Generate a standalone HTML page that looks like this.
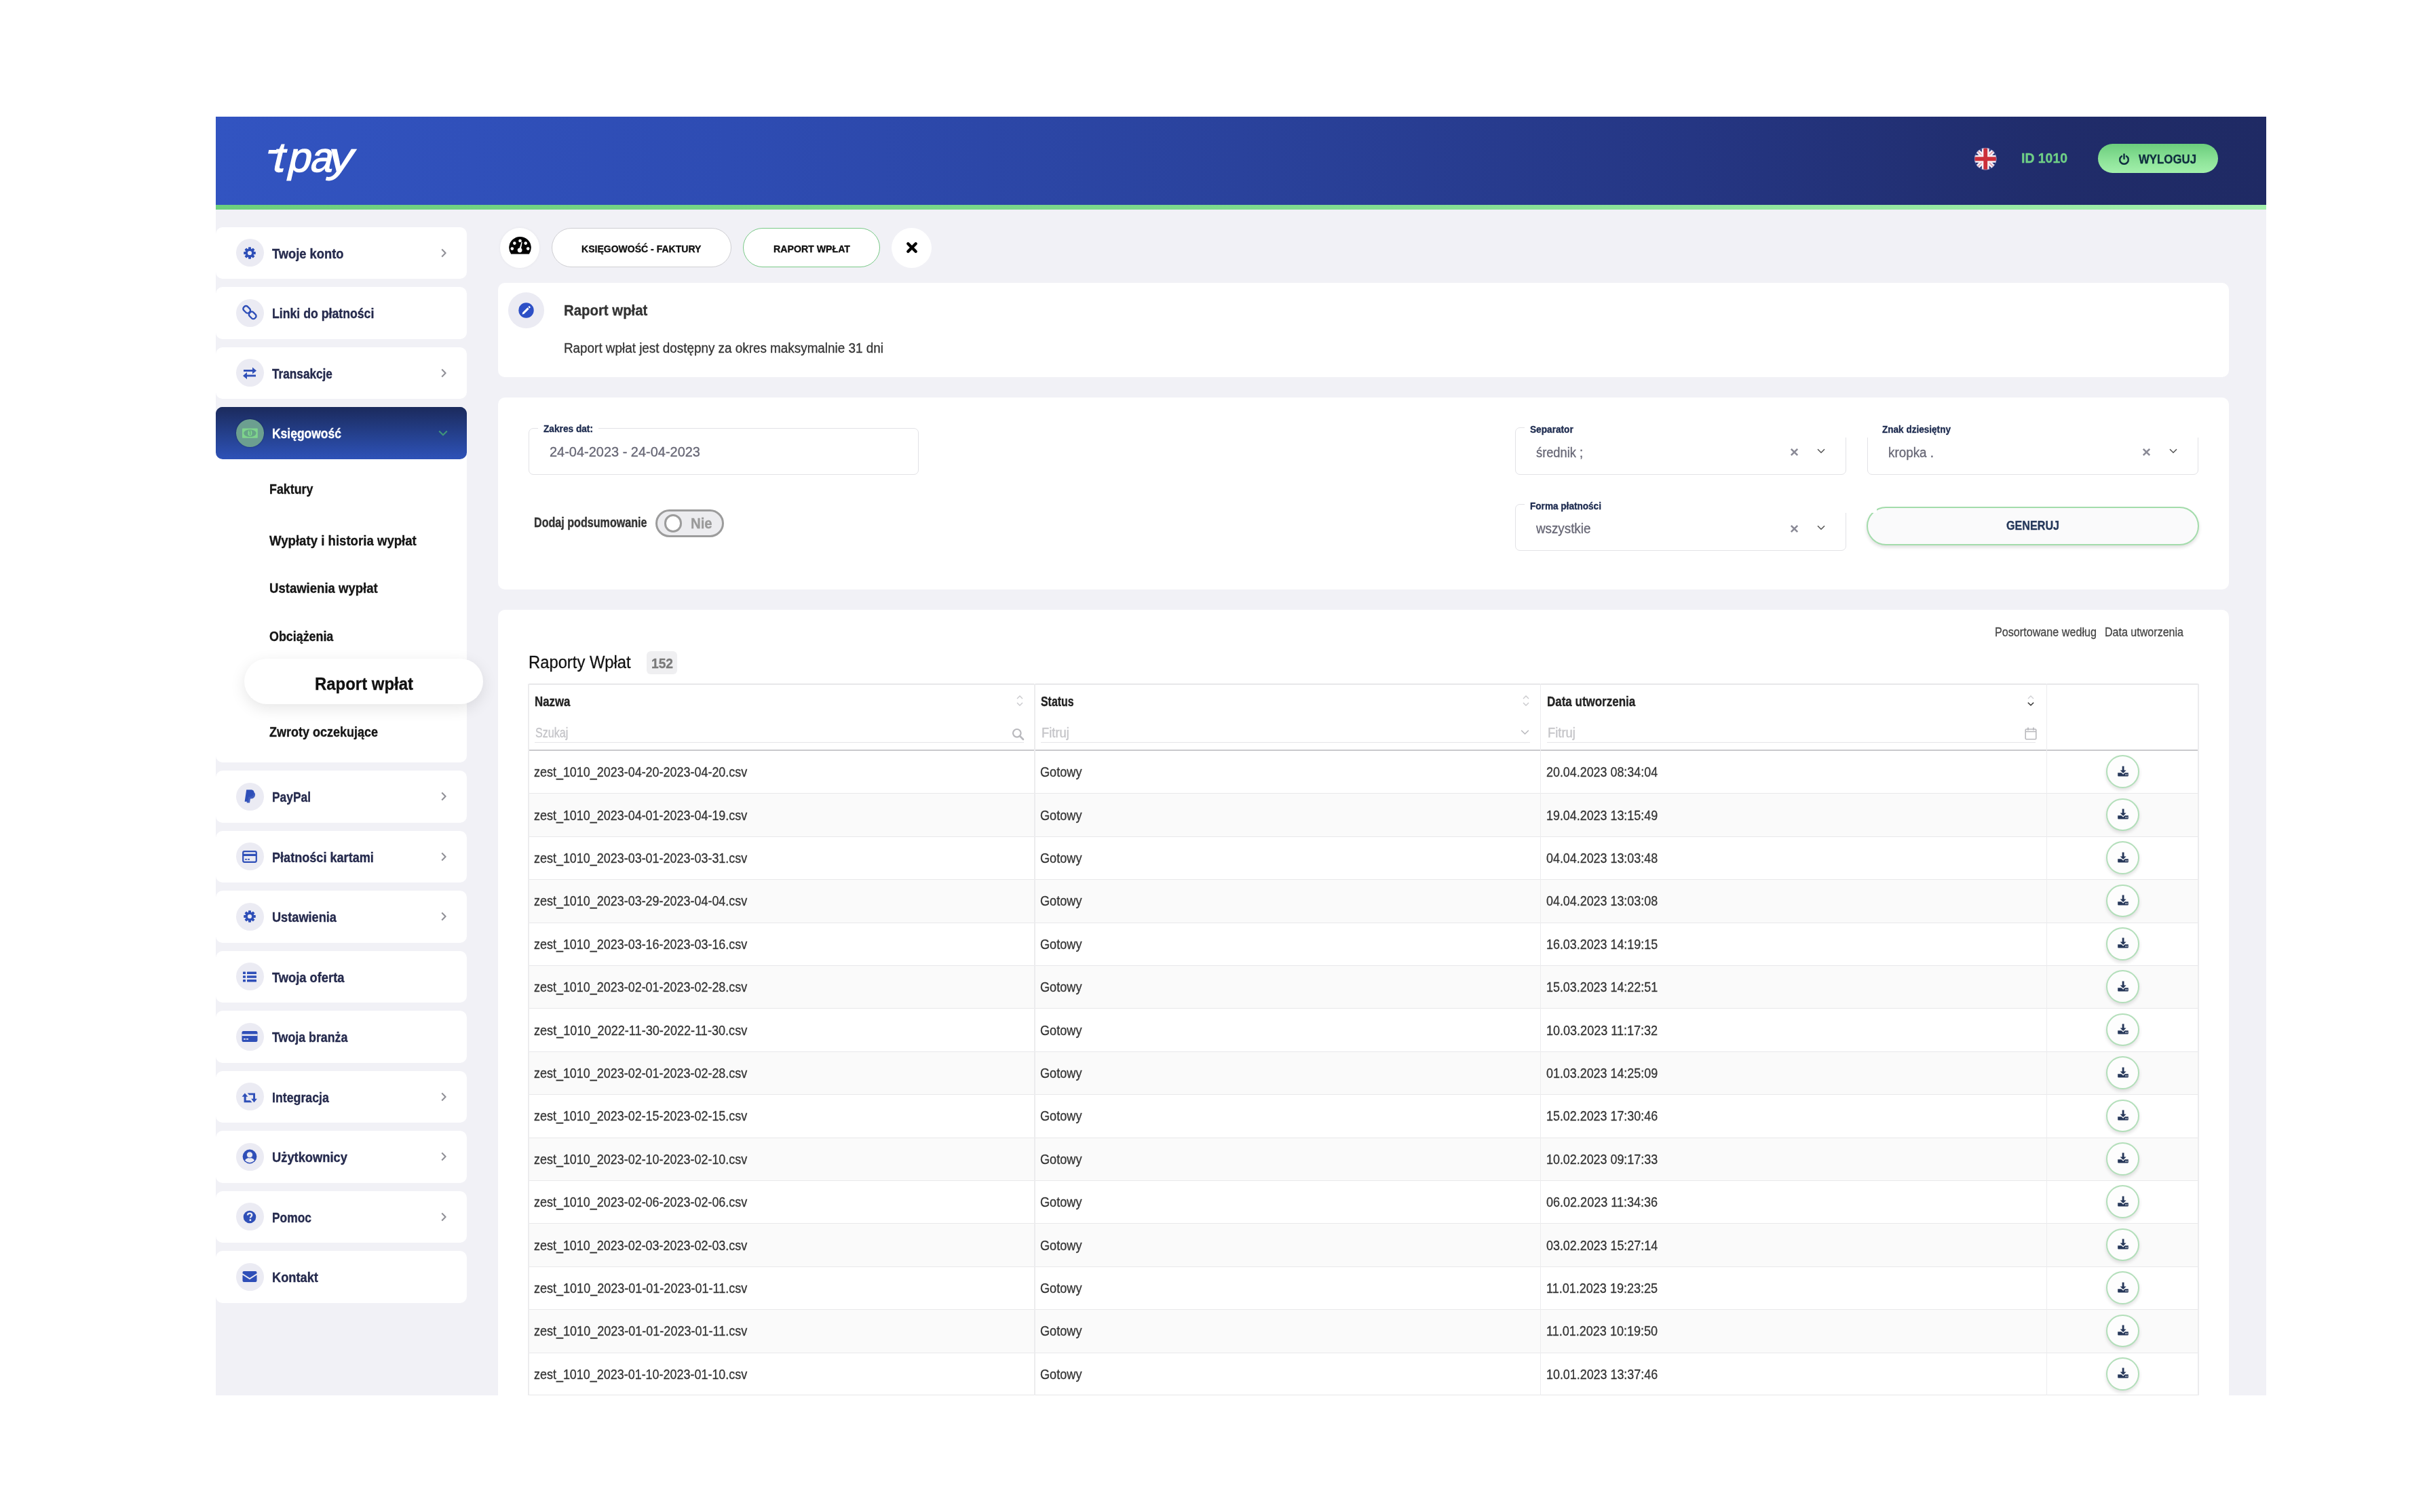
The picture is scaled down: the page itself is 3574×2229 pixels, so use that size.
<!DOCTYPE html><html><head><meta charset="utf-8"><style>
html,body{margin:0;padding:0;background:#fff;width:3574px;height:2229px;overflow:hidden;position:relative;font-family:"Liberation Sans",sans-serif;}
.t{position:absolute;white-space:nowrap;transform-origin:0 50%;}
.b{position:absolute;box-sizing:border-box;}
svg.b{overflow:visible;}
#root{position:absolute;left:0;top:0;width:3574px;height:2229px;will-change:transform;}
</style></head><body><div id="root">
<div class="b" style="left:318.0px;top:172.0px;width:3022.0px;height:1885.0px;background:#f1f1f6;"></div>
<div class="b" style="left:318.0px;top:172.0px;width:3022.0px;height:130.0px;background:linear-gradient(90deg,#3254c1 0%,#2e4cb3 25%,#2a429c 50%,#253683 72%,#202c6a 90%,#1f2a64 100%);"></div>
<div class="b" style="left:318.0px;top:302.0px;width:3022.0px;height:7.0px;background:linear-gradient(90deg,#6dcf7e 0%,#7dda8d 50%,#a3f0ad 100%);"></div>
<svg class="b" style="left:0;top:0" width="600" height="300" viewBox="0 0 600 300"><g transform="translate(0,252.7) skewX(-13) translate(0,-252.7)" fill="#fff" stroke="#fff" stroke-width="1.3" font-family="Liberation Sans" font-size="61.6"><text x="399.5" y="252.7">t</text><rect x="389" y="221.1" width="14" height="5.4" stroke="none"/><text x="421.7" y="252.7">p</text><text x="455.3" y="252.7" transform="translate(455.3,0) scale(0.95,1) translate(-455.3,0)">a</text><text x="481.2" y="252.7" transform="translate(481.2,0) scale(1.18,1) translate(-481.2,0)">y</text></g></svg>
<svg class="b" style="left:2910.0px;top:218.0px" width="32.5" height="32.5" viewBox="0 0 32.5 32.5"><defs><clipPath id="fc"><circle cx="16.25" cy="16.25" r="16.25"/></clipPath></defs>
<g clip-path="url(#fc)"><rect width="33" height="33" fill="#18246c"/>
<path d="M0 0L32.5 32.5M32.5 0L0 32.5" stroke="#f4eef6" stroke-width="6.5"/>
<path d="M0 0L32.5 32.5M32.5 0L0 32.5" stroke="#d0454f" stroke-width="1.2" opacity="0.6"/>
<path d="M16.25 0V32.5M0 16.25H32.5" stroke="#f6eef4" stroke-width="10.9"/>
<path d="M16.25 0V32.5M0 16.25H32.5" stroke="#cc2f3a" stroke-width="5.8"/></g><circle cx="16.25" cy="16.25" r="16" fill="none" stroke="#7f8fc8" stroke-width="1" opacity="0.6"/></svg>
<div class="t" style="left:2979.0px;top:223.0px;font-size:20.35px;line-height:20.35px;font-weight:700;color:#6fcf86;-webkit-text-stroke:0.35px #6fcf86;transform:scaleX(0.9541);">ID 1010</div>
<div class="b" style="left:3092.0px;top:212.0px;width:177.0px;height:43.0px;border-radius:22px;background:linear-gradient(180deg,#6bcd7d 0%,#8fe49a 60%,#a2f0ab 100%);"></div>
<svg class="b" style="left:3122.0px;top:226.0px" width="17.0" height="17.0" viewBox="0 0 17 17"><path d="M5 4.2A6.3 6.3 0 1 0 12 4.2" fill="none" stroke="#0f2d3f" stroke-width="2.4" stroke-linecap="round"/><path d="M8.5 1.5V8" stroke="#0f2d3f" stroke-width="2.4" stroke-linecap="round"/></svg>
<div class="t" style="left:3152.0px;top:226.3px;font-size:18.90px;line-height:18.90px;font-weight:700;color:#0f2d3f;-webkit-text-stroke:0.35px #0f2d3f;transform:scaleX(0.8898);">WYLOGUJ</div>
<div class="b" style="left:318.0px;top:334.5px;width:370.0px;height:76.5px;background:#fff;border-radius:10px;"></div>
<div class="b" style="left:348.0px;top:352.4px;width:40.8px;height:40.8px;background:#ebebf3;border-radius:50%;"></div>
<svg class="b" style="left:358.4px;top:362.8px" width="20.0" height="20.0" viewBox="0 0 20 20"><g fill="#2f4fb8"><circle cx="10" cy="10" r="6.4"/><rect x="8" y="1.2" width="4" height="4.5" rx="0.8" transform="rotate(0 10 10)"/><rect x="8" y="1.2" width="4" height="4.5" rx="0.8" transform="rotate(45 10 10)"/><rect x="8" y="1.2" width="4" height="4.5" rx="0.8" transform="rotate(90 10 10)"/><rect x="8" y="1.2" width="4" height="4.5" rx="0.8" transform="rotate(135 10 10)"/><rect x="8" y="1.2" width="4" height="4.5" rx="0.8" transform="rotate(180 10 10)"/><rect x="8" y="1.2" width="4" height="4.5" rx="0.8" transform="rotate(225 10 10)"/><rect x="8" y="1.2" width="4" height="4.5" rx="0.8" transform="rotate(270 10 10)"/><rect x="8" y="1.2" width="4" height="4.5" rx="0.8" transform="rotate(315 10 10)"/></g><circle cx="10" cy="10" r="3.1" fill="#ebebf3"/></svg>
<div class="t" style="left:401.0px;top:363.7px;font-size:20.20px;line-height:20.20px;font-weight:700;color:#252a4d;-webkit-text-stroke:0.35px #252a4d;transform:scaleX(0.9067);">Twoje konto</div>
<svg class="b" style="left:648.5px;top:365.8px" width="10.0" height="14.0" viewBox="0 0 10 14"><path d="M2.2 1.5L7.6 7L2.2 12.5" fill="none" stroke="#8f8f96" stroke-width="2"/></svg>
<div class="b" style="left:318.0px;top:423.0px;width:370.0px;height:76.5px;background:#fff;border-radius:10px;"></div>
<div class="b" style="left:348.0px;top:440.9px;width:40.8px;height:40.8px;background:#ebebf3;border-radius:50%;"></div>
<svg class="b" style="left:358.4px;top:451.2px" width="20.0" height="20.0" viewBox="0 0 20 20"><g fill="none" stroke="#2f4fb8" stroke-width="2.4"><rect x="0.2" y="1.45" width="11" height="7.8" rx="3.2" transform="rotate(45 5.7 5.35)"/><rect x="8.7" y="9.95" width="11" height="7.8" rx="3.2" transform="rotate(45 14.2 13.85)"/></g></svg>
<div class="t" style="left:401.0px;top:452.2px;font-size:20.20px;line-height:20.20px;font-weight:700;color:#252a4d;-webkit-text-stroke:0.35px #252a4d;transform:scaleX(0.8763);">Linki do płatności</div>
<div class="b" style="left:318.0px;top:511.5px;width:370.0px;height:76.5px;background:#fff;border-radius:10px;"></div>
<div class="b" style="left:348.0px;top:529.4px;width:40.8px;height:40.8px;background:#ebebf3;border-radius:50%;"></div>
<svg class="b" style="left:357.4px;top:539.8px" width="22.0" height="20.0" viewBox="0 0 22 20"><g fill="#2f4fb8"><rect x="2" y="5" width="15" height="2.8"/><path d="M15 1.5L21 6.4L15 11.3Z"/><rect x="5" y="12.5" width="15" height="2.8"/><path d="M7 8.7L1 13.9L7 19Z"/></g></svg>
<div class="t" style="left:401.0px;top:540.7px;font-size:20.20px;line-height:20.20px;font-weight:700;color:#252a4d;-webkit-text-stroke:0.35px #252a4d;transform:scaleX(0.8520);">Transakcje</div>
<svg class="b" style="left:648.5px;top:542.8px" width="10.0" height="14.0" viewBox="0 0 10 14"><path d="M2.2 1.5L7.6 7L2.2 12.5" fill="none" stroke="#8f8f96" stroke-width="2"/></svg>
<div class="b" style="left:318.0px;top:600.0px;width:370.0px;height:76.5px;background:linear-gradient(180deg,#1b2a5c 0%,#25418f 55%,#2e52b8 100%);border-radius:10px 10px 0 0;"></div>
<div class="b" style="left:318.0px;top:660.0px;width:370.0px;height:463.5px;background:#fff;border-radius:0 0 10px 10px;"></div>
<div class="b" style="left:318.0px;top:600.0px;width:370.0px;height:76.5px;background:linear-gradient(180deg,#1b2a5c 0%,#25418f 55%,#2e52b8 100%);border-radius:10px;"></div>
<div class="b" style="left:348.0px;top:617.9px;width:40.8px;height:40.8px;background:#6c9f90;border-radius:50%;box-shadow:0 0 2px rgba(10,30,60,0.6);"></div>
<svg class="b" style="left:357.0px;top:630.6px" width="23.0" height="15.0" viewBox="0 0 23 15"><rect x="0" y="0.4" width="22.8" height="14.4" rx="0.8" fill="#7fd58c"/><ellipse cx="11.4" cy="7.6" rx="9.2" ry="5.4" fill="#67a487"/><ellipse cx="11.4" cy="7.4" rx="3" ry="4.4" fill="#80d690"/><path d="M10.4 4.4L11.6 3.8V10.4" fill="none" stroke="#4f9a6b" stroke-width="1.1"/></svg>
<div class="t" style="left:401.0px;top:629.3px;font-size:20.20px;line-height:20.20px;font-weight:700;color:#ffffff;-webkit-text-stroke:0.35px #ffffff;transform:scaleX(0.8652);">Księgowość</div>
<svg class="b" style="left:646.0px;top:634.0px" width="14.0" height="9.0" viewBox="0 0 14 9"><path d="M1.2 1.5L7 7.2L12.8 1.5" fill="none" stroke="#3f957a" stroke-width="2.1"/></svg>
<div class="t" style="left:397.0px;top:710.2px;font-size:21.08px;line-height:21.08px;font-weight:700;color:#151515;-webkit-text-stroke:0.35px #151515;transform:scaleX(0.8459);">Faktury</div>
<div class="t" style="left:397.0px;top:785.7px;font-size:21.08px;line-height:21.08px;font-weight:700;color:#151515;-webkit-text-stroke:0.35px #151515;transform:scaleX(0.8829);">Wypłaty i historia wypłat</div>
<div class="t" style="left:397.0px;top:856.2px;font-size:21.08px;line-height:21.08px;font-weight:700;color:#151515;-webkit-text-stroke:0.35px #151515;transform:scaleX(0.8797);">Ustawienia wypłat</div>
<div class="t" style="left:397.0px;top:927.2px;font-size:21.08px;line-height:21.08px;font-weight:700;color:#151515;-webkit-text-stroke:0.35px #151515;transform:scaleX(0.8474);">Obciążenia</div>
<div class="t" style="left:397.0px;top:1068.2px;font-size:21.08px;line-height:21.08px;font-weight:700;color:#151515;-webkit-text-stroke:0.35px #151515;transform:scaleX(0.8537);">Zwroty oczekujące</div>
<div class="b" style="left:359.7px;top:971.0px;width:352.0px;height:67.0px;background:#fff;border-radius:34px;box-shadow:0 6px 22px rgba(0,0,0,0.10);"></div>
<div class="t" style="left:463.5px;top:994.9px;font-size:26.16px;line-height:26.16px;font-weight:700;color:#111;-webkit-text-stroke:0.35px #111;transform:scaleX(0.9152);">Raport wpłat</div>
<div class="b" style="left:318.0px;top:1136.0px;width:370.0px;height:76.5px;background:#fff;border-radius:10px;"></div>
<div class="b" style="left:348.0px;top:1153.8px;width:40.8px;height:40.8px;background:#ebebf3;border-radius:50%;"></div>
<svg class="b" style="left:358.4px;top:1163.2px" width="20.0" height="22.0" viewBox="0 0 20 22"><g fill="#2f4fb8"><path d="M5.2 1.2H11.6C15.4 1.2 17 3.4 16.4 6.6C15.7 10.2 13.2 11.8 9.8 11.8H8.4L7.2 18.8H2.6Z"/><path d="M8.2 4.6H13.6C16.8 4.6 18.6 6.4 18 9.6C17.4 12.8 15 14.6 12 14.6H11L10 20.6H5.6L6.6 16Z" fill-opacity="0.9"/></g><path d="M7.4 13.2L8.6 6.2H11.6C13.4 6.2 14.2 7.2 13.9 8.8C13.6 10.6 12.4 11.4 10.6 11.4H9.2Z" fill="#ebebf3" opacity="0.0"/></svg>
<div class="t" style="left:401.0px;top:1165.2px;font-size:20.20px;line-height:20.20px;font-weight:700;color:#252a4d;-webkit-text-stroke:0.35px #252a4d;transform:scaleX(0.8600);">PayPal</div>
<svg class="b" style="left:648.5px;top:1167.2px" width="10.0" height="14.0" viewBox="0 0 10 14"><path d="M2.2 1.5L7.6 7L2.2 12.5" fill="none" stroke="#8f8f96" stroke-width="2"/></svg>
<div class="b" style="left:318.0px;top:1224.5px;width:370.0px;height:76.5px;background:#fff;border-radius:10px;"></div>
<div class="b" style="left:348.0px;top:1242.3px;width:40.8px;height:40.8px;background:#ebebf3;border-radius:50%;"></div>
<svg class="b" style="left:357.4px;top:1253.8px" width="22.0" height="18.0" viewBox="0 0 22 18"><rect x="1.2" y="1.2" width="19.6" height="15.6" rx="2" fill="none" stroke="#2f4fb8" stroke-width="2.2"/><rect x="1" y="4.8" width="20" height="3.2" fill="#2f4fb8"/><rect x="4" y="12" width="3" height="1.6" fill="#2f4fb8"/><rect x="8" y="12" width="3" height="1.6" fill="#2f4fb8"/></svg>
<div class="t" style="left:401.0px;top:1253.7px;font-size:20.20px;line-height:20.20px;font-weight:700;color:#252a4d;-webkit-text-stroke:0.35px #252a4d;transform:scaleX(0.8965);">Płatności kartami</div>
<svg class="b" style="left:648.5px;top:1255.8px" width="10.0" height="14.0" viewBox="0 0 10 14"><path d="M2.2 1.5L7.6 7L2.2 12.5" fill="none" stroke="#8f8f96" stroke-width="2"/></svg>
<div class="b" style="left:318.0px;top:1313.0px;width:370.0px;height:76.5px;background:#fff;border-radius:10px;"></div>
<div class="b" style="left:348.0px;top:1330.8px;width:40.8px;height:40.8px;background:#ebebf3;border-radius:50%;"></div>
<svg class="b" style="left:358.4px;top:1341.2px" width="20.0" height="20.0" viewBox="0 0 20 20"><g fill="#2f4fb8"><circle cx="10" cy="10" r="6.4"/><rect x="8" y="1.2" width="4" height="4.5" rx="0.8" transform="rotate(0 10 10)"/><rect x="8" y="1.2" width="4" height="4.5" rx="0.8" transform="rotate(45 10 10)"/><rect x="8" y="1.2" width="4" height="4.5" rx="0.8" transform="rotate(90 10 10)"/><rect x="8" y="1.2" width="4" height="4.5" rx="0.8" transform="rotate(135 10 10)"/><rect x="8" y="1.2" width="4" height="4.5" rx="0.8" transform="rotate(180 10 10)"/><rect x="8" y="1.2" width="4" height="4.5" rx="0.8" transform="rotate(225 10 10)"/><rect x="8" y="1.2" width="4" height="4.5" rx="0.8" transform="rotate(270 10 10)"/><rect x="8" y="1.2" width="4" height="4.5" rx="0.8" transform="rotate(315 10 10)"/></g><circle cx="10" cy="10" r="3.1" fill="#ebebf3"/></svg>
<div class="t" style="left:401.0px;top:1342.2px;font-size:20.20px;line-height:20.20px;font-weight:700;color:#252a4d;-webkit-text-stroke:0.35px #252a4d;transform:scaleX(0.9001);">Ustawienia</div>
<svg class="b" style="left:648.5px;top:1344.2px" width="10.0" height="14.0" viewBox="0 0 10 14"><path d="M2.2 1.5L7.6 7L2.2 12.5" fill="none" stroke="#8f8f96" stroke-width="2"/></svg>
<div class="b" style="left:318.0px;top:1401.5px;width:370.0px;height:76.5px;background:#fff;border-radius:10px;"></div>
<div class="b" style="left:348.0px;top:1419.3px;width:40.8px;height:40.8px;background:#ebebf3;border-radius:50%;"></div>
<svg class="b" style="left:357.4px;top:1430.8px" width="22.0" height="18.0" viewBox="0 0 22 18"><g fill="#2f4fb8"><rect x="1" y="1.5" width="4" height="3.6" rx="0.6"/><rect x="7" y="1.5" width="14" height="3.6" rx="0.6"/><rect x="1" y="7.2" width="4" height="3.6" rx="0.6"/><rect x="7" y="7.2" width="14" height="3.6" rx="0.6"/><rect x="1" y="12.9" width="4" height="3.6" rx="0.6"/><rect x="7" y="12.9" width="14" height="3.6" rx="0.6"/></g></svg>
<div class="t" style="left:401.0px;top:1430.7px;font-size:20.20px;line-height:20.20px;font-weight:700;color:#252a4d;-webkit-text-stroke:0.35px #252a4d;transform:scaleX(0.9064);">Twoja oferta</div>
<div class="b" style="left:318.0px;top:1490.0px;width:370.0px;height:76.5px;background:#fff;border-radius:10px;"></div>
<div class="b" style="left:348.0px;top:1507.8px;width:40.8px;height:40.8px;background:#ebebf3;border-radius:50%;"></div>
<svg class="b" style="left:356.4px;top:1519.2px" width="24.0" height="18.0" viewBox="0 0 24 18"><rect x="0.5" y="1" width="23" height="16" rx="2.2" fill="#2f4fb8"/><rect x="0.5" y="5.5" width="23" height="2.6" fill="#ebebf3"/><rect x="3" y="12" width="3" height="1.6" fill="#ebebf3"/><rect x="7" y="12" width="3" height="1.6" fill="#ebebf3"/></svg>
<div class="t" style="left:401.0px;top:1519.2px;font-size:20.20px;line-height:20.20px;font-weight:700;color:#252a4d;-webkit-text-stroke:0.35px #252a4d;transform:scaleX(0.8816);">Twoja branża</div>
<div class="b" style="left:318.0px;top:1578.5px;width:370.0px;height:76.5px;background:#fff;border-radius:10px;"></div>
<div class="b" style="left:348.0px;top:1596.3px;width:40.8px;height:40.8px;background:#ebebf3;border-radius:50%;"></div>
<svg class="b" style="left:356.4px;top:1607.8px" width="24.0" height="18.0" viewBox="0 0 24 18"><g fill="#2f4fb8"><path d="M4.9 3.55L9.4 8.85H6.7V14.35H12.7L15.5 17.15H3.6V8.85H0.6Z"/><path d="M8.7 3.45H20V11.65H22.9L18.5 17.15L14.2 11.65H17.1V6.35H11.2Z"/></g></svg>
<div class="t" style="left:401.0px;top:1607.7px;font-size:20.20px;line-height:20.20px;font-weight:700;color:#252a4d;-webkit-text-stroke:0.35px #252a4d;transform:scaleX(0.8801);">Integracja</div>
<svg class="b" style="left:648.5px;top:1609.8px" width="10.0" height="14.0" viewBox="0 0 10 14"><path d="M2.2 1.5L7.6 7L2.2 12.5" fill="none" stroke="#8f8f96" stroke-width="2"/></svg>
<div class="b" style="left:318.0px;top:1667.0px;width:370.0px;height:76.5px;background:#fff;border-radius:10px;"></div>
<div class="b" style="left:348.0px;top:1684.8px;width:40.8px;height:40.8px;background:#ebebf3;border-radius:50%;"></div>
<svg class="b" style="left:357.4px;top:1694.2px" width="22.0" height="22.0" viewBox="0 0 22 22"><defs><clipPath id="uc"><circle cx="11" cy="11" r="8.9"/></clipPath></defs><circle cx="11" cy="11" r="10.4" fill="#2f4fb8"/><ellipse cx="11" cy="18.4" rx="7.4" ry="5.6" fill="#ebebf3" clip-path="url(#uc)"/><circle cx="11" cy="8.4" r="4.6" fill="#ebebf3" stroke="#2f4fb8" stroke-width="1"/></svg>
<div class="t" style="left:401.0px;top:1696.2px;font-size:20.20px;line-height:20.20px;font-weight:700;color:#252a4d;-webkit-text-stroke:0.35px #252a4d;transform:scaleX(0.9070);">Użytkownicy</div>
<svg class="b" style="left:648.5px;top:1698.2px" width="10.0" height="14.0" viewBox="0 0 10 14"><path d="M2.2 1.5L7.6 7L2.2 12.5" fill="none" stroke="#8f8f96" stroke-width="2"/></svg>
<div class="b" style="left:318.0px;top:1755.5px;width:370.0px;height:76.5px;background:#fff;border-radius:10px;"></div>
<div class="b" style="left:348.0px;top:1773.3px;width:40.8px;height:40.8px;background:#ebebf3;border-radius:50%;"></div>
<svg class="b" style="left:358.4px;top:1783.8px" width="20.0" height="20.0" viewBox="0 0 20 20"><circle cx="10" cy="10" r="9.3" fill="#2f4fb8"/><path d="M7 7.6C7 5.7 8.4 4.6 10.1 4.6C11.9 4.6 13.2 5.7 13.2 7.3C13.2 9.3 10.9 9.5 10.9 11.4" fill="none" stroke="#ebebf3" stroke-width="2.4"/><rect x="9.6" y="13.3" width="2.6" height="2.6" rx="0.5" fill="#ebebf3"/></svg>
<div class="t" style="left:401.0px;top:1784.7px;font-size:20.20px;line-height:20.20px;font-weight:700;color:#252a4d;-webkit-text-stroke:0.35px #252a4d;transform:scaleX(0.8610);">Pomoc</div>
<svg class="b" style="left:648.5px;top:1786.8px" width="10.0" height="14.0" viewBox="0 0 10 14"><path d="M2.2 1.5L7.6 7L2.2 12.5" fill="none" stroke="#8f8f96" stroke-width="2"/></svg>
<div class="b" style="left:318.0px;top:1844.0px;width:370.0px;height:76.5px;background:#fff;border-radius:10px;"></div>
<div class="b" style="left:348.0px;top:1861.8px;width:40.8px;height:40.8px;background:#ebebf3;border-radius:50%;"></div>
<svg class="b" style="left:357.4px;top:1873.2px" width="22.0" height="18.0" viewBox="0 0 22 18"><path d="M0.5 3A2 2 0 0 1 2.5 1H19.5A2 2 0 0 1 21.5 3V4.2L11 11L0.5 4.2Z" fill="#2f4fb8"/><path d="M0.5 6.6L11 13.3L21.5 6.6V15A2 2 0 0 1 19.5 17H2.5A2 2 0 0 1 0.5 15Z" fill="#2f4fb8"/></svg>
<div class="t" style="left:401.0px;top:1873.2px;font-size:20.20px;line-height:20.20px;font-weight:700;color:#252a4d;-webkit-text-stroke:0.35px #252a4d;transform:scaleX(0.9042);">Kontakt</div>
<div class="b" style="left:737.3px;top:335.6px;width:58.0px;height:59.0px;background:#fff;border-radius:50%;box-shadow:0 0 4px rgba(0,0,0,0.05);"></div>
<svg class="b" style="left:750.0px;top:349.0px" width="33.0" height="26.0" viewBox="0 0 33 26"><path d="M3.2 25.6A16.3 16.3 0 1 1 29.8 25.6Z" fill="#000"/><g fill="#fff"><circle cx="16.5" cy="6" r="2.3"/><circle cx="8.3" cy="9.6" r="2.3"/><circle cx="24.7" cy="9.6" r="2.3"/><circle cx="4.8" cy="17.6" r="2.3"/><circle cx="28.2" cy="17.6" r="2.3"/><circle cx="16.1" cy="19.8" r="3.4"/><path d="M14.8 19.5L18.6 7.6L19.7 8L17.5 20.2Z"/></g></svg>
<div class="b" style="left:813.0px;top:336.0px;width:265.0px;height:58.0px;background:#fff;border:1.5px solid #cfcfd3;border-radius:30px;box-sizing:border-box;"></div>
<div class="t" style="left:857.4px;top:358.7px;font-size:15.55px;line-height:15.55px;font-weight:700;color:#111;-webkit-text-stroke:0.35px #111;transform:scaleX(0.9025);">KSIĘGOWOŚĆ - FAKTURY</div>
<div class="b" style="left:1095.0px;top:336.0px;width:202.0px;height:58.0px;background:#fff;border:1.5px solid #79c987;border-radius:30px;box-sizing:border-box;"></div>
<div class="t" style="left:1140.0px;top:358.7px;font-size:15.55px;line-height:15.55px;font-weight:700;color:#111;-webkit-text-stroke:0.35px #111;transform:scaleX(0.9104);">RAPORT WPŁAT</div>
<div class="b" style="left:1314.0px;top:336.0px;width:59.0px;height:59.0px;background:#fff;border-radius:50%;"></div>
<svg class="b" style="left:1333.8px;top:355.4px" width="20.0" height="20.0" viewBox="0 0 20 20"><path d="M4.3 4.3L15.7 15.7M15.7 4.3L4.3 15.7" stroke="#000" stroke-width="4.4" stroke-linecap="round"/></svg>
<div class="b" style="left:734.0px;top:417.0px;width:2551.0px;height:139.0px;background:#fff;border-radius:10px;"></div>
<div class="b" style="left:749.3px;top:431.4px;width:52.9px;height:52.6px;background:#ebebf3;border-radius:50%;"></div>
<svg class="b" style="left:764.0px;top:446.3px" width="23.0" height="23.0" viewBox="0 0 23 23"><circle cx="11.5" cy="11.5" r="11.2" fill="#2d50c6"/><path d="M5.6 17.4L6.3 14.6L13.6 7.3L15.7 9.4L8.4 16.7Z" fill="#fff"/><path d="M14.4 6.5L15.3 5.6Q16 5 16.7 5.6L17.4 6.3Q18 7 17.4 7.7L16.5 8.6Z" fill="#fff"/></svg>
<div class="t" style="left:830.8px;top:446.8px;font-size:22.38px;line-height:22.38px;font-weight:700;color:#333;-webkit-text-stroke:0.35px #333;transform:scaleX(0.9104);">Raport wpłat</div>
<div class="t" style="left:830.8px;top:502.5px;font-size:20.35px;line-height:20.35px;color:#333;-webkit-text-stroke:0.3px #333;transform:scaleX(0.9274);">Raport wpłat jest dostępny za okres maksymalnie 31 dni</div>
<div class="b" style="left:734.0px;top:586.0px;width:2551.0px;height:283.0px;background:#fff;border-radius:10px;"></div>
<div class="b" style="left:779.0px;top:630.6px;width:575.0px;height:69.4px;border:1.5px solid #e2e2e6;border-radius:7px;box-sizing:border-box;background:#fff;"></div>
<div class="b" style="left:792.5px;top:626.6px;width:89.0px;height:10.0px;background:#fff;"></div>
<div class="t" style="left:800.5px;top:624.4px;font-size:15.12px;line-height:15.12px;font-weight:700;color:#1d2b4f;-webkit-text-stroke:0.35px #1d2b4f;transform:scaleX(0.9051);">Zakres dat:</div>
<div class="t" style="left:810.0px;top:656.7px;font-size:19.77px;line-height:19.77px;color:#676775;-webkit-text-stroke:0.3px #676775;transform:scaleX(1.0100);">24-04-2023 - 24-04-2023</div>
<div class="b" style="left:2232.8px;top:630.4px;width:488.2px;height:69.6px;border:1.5px solid #e2e2e6;border-radius:7px;box-sizing:border-box;background:#fff;"></div>
<div class="t" style="left:2254.8px;top:625.3px;font-size:15.12px;line-height:15.12px;font-weight:700;color:#1d2b4f;-webkit-text-stroke:0.35px #1d2b4f;transform:scaleX(0.9040);">Separator</div>
<div class="t" style="left:2264.0px;top:657.6px;font-size:19.77px;line-height:19.77px;color:#676775;-webkit-text-stroke:0.3px #676775;transform:scaleX(0.9236);">średnik ;</div>
<svg class="b" style="left:2637.5px;top:660.3px" width="13.0" height="13.0" viewBox="0 0 13 13"><path d="M1.8 1.8L11.2 11.2M11.2 1.8L1.8 11.2" stroke="#8a8a96" stroke-width="2.6"/></svg>
<svg class="b" style="left:2677.5px;top:661.3px" width="12.0" height="8.0" viewBox="0 0 12 8"><path d="M1 1.2L6 6.2L11 1.2" fill="none" stroke="#555" stroke-width="1.6"/></svg>
<div class="b" style="left:2751.7px;top:630.4px;width:488.3px;height:69.6px;border:1.5px solid #e2e2e6;border-radius:7px;box-sizing:border-box;background:#fff;"></div>
<div class="t" style="left:2773.7px;top:625.3px;font-size:15.12px;line-height:15.12px;font-weight:700;color:#1d2b4f;-webkit-text-stroke:0.35px #1d2b4f;transform:scaleX(0.8972);">Znak dziesiętny</div>
<div class="t" style="left:2782.5px;top:657.6px;font-size:19.77px;line-height:19.77px;color:#676775;-webkit-text-stroke:0.3px #676775;transform:scaleX(0.9528);">kropka .</div>
<svg class="b" style="left:3156.5px;top:660.3px" width="13.0" height="13.0" viewBox="0 0 13 13"><path d="M1.8 1.8L11.2 11.2M11.2 1.8L1.8 11.2" stroke="#8a8a96" stroke-width="2.6"/></svg>
<svg class="b" style="left:3196.5px;top:661.3px" width="12.0" height="8.0" viewBox="0 0 12 8"><path d="M1 1.2L6 6.2L11 1.2" fill="none" stroke="#555" stroke-width="1.6"/></svg>
<div class="b" style="left:2232.8px;top:743.0px;width:488.2px;height:69.2px;border:1.5px solid #e2e2e6;border-radius:7px;box-sizing:border-box;background:#fff;"></div>
<div class="t" style="left:2254.8px;top:737.8px;font-size:15.12px;line-height:15.12px;font-weight:700;color:#1d2b4f;-webkit-text-stroke:0.35px #1d2b4f;transform:scaleX(0.8993);">Forma płatności</div>
<div class="t" style="left:2264.0px;top:769.8px;font-size:19.77px;line-height:19.77px;color:#676775;-webkit-text-stroke:0.3px #676775;transform:scaleX(0.9507);">wszystkie</div>
<svg class="b" style="left:2637.5px;top:772.5px" width="13.0" height="13.0" viewBox="0 0 13 13"><path d="M1.8 1.8L11.2 11.2M11.2 1.8L1.8 11.2" stroke="#8a8a96" stroke-width="2.6"/></svg>
<svg class="b" style="left:2677.5px;top:773.5px" width="12.0" height="8.0" viewBox="0 0 12 8"><path d="M1 1.2L6 6.2L11 1.2" fill="none" stroke="#555" stroke-width="1.6"/></svg>
<div class="t" style="left:786.6px;top:760.6px;font-size:19.33px;line-height:19.33px;font-weight:700;color:#333;-webkit-text-stroke:0.35px #333;transform:scaleX(0.8339);">Dodaj podsumowanie</div>
<div class="b" style="left:966.0px;top:750.8px;width:101.0px;height:41.2px;background:#ececef;border:3px solid #9c9c9c;border-radius:21px;box-sizing:border-box;"></div>
<div class="b" style="left:978.7px;top:757.8px;width:26.8px;height:26.8px;background:#fff;border:3px solid #9c9c9c;border-radius:50%;box-sizing:border-box;"></div>
<div class="t" style="left:1018.0px;top:760.5px;font-size:21.80px;line-height:21.80px;font-weight:700;color:#9a9a9a;-webkit-text-stroke:0.35px #9a9a9a;transform:scaleX(0.9343);">Nie</div>
<div class="b" style="left:2750.6px;top:747.3px;width:490.4px;height:56.9px;background:#fafafb;border:2.5px solid #a3dcab;border-radius:29px;box-sizing:border-box;box-shadow:0 3px 5px rgba(0,0,0,0.13);"></div>
<div class="t" style="left:2957.2px;top:765.4px;font-size:19.19px;line-height:19.19px;font-weight:700;color:#24375a;-webkit-text-stroke:0.35px #24375a;transform:scaleX(0.8409);">GENERUJ</div>
<div class="b" style="left:2246.8px;top:620.7px;width:1003.2px;height:24.1px;background:#fff;"></div>
<div class="b" style="left:2246.8px;top:732.9px;width:519.2px;height:23.6px;background:#fff;"></div>
<div class="t" style="left:2254.8px;top:625.3px;font-size:15.12px;line-height:15.12px;font-weight:700;color:#1d2b4f;-webkit-text-stroke:0.35px #1d2b4f;transform:scaleX(0.9040);">Separator</div>
<div class="t" style="left:2773.7px;top:625.3px;font-size:15.12px;line-height:15.12px;font-weight:700;color:#1d2b4f;-webkit-text-stroke:0.35px #1d2b4f;transform:scaleX(0.8972);">Znak dziesiętny</div>
<div class="t" style="left:2254.8px;top:737.8px;font-size:15.12px;line-height:15.12px;font-weight:700;color:#1d2b4f;-webkit-text-stroke:0.35px #1d2b4f;transform:scaleX(0.8993);">Forma płatności</div>
<div class="b" style="left:734.0px;top:898.7px;width:2551.0px;height:1158.3px;background:#fff;border-radius:10px 10px 0 0;"></div>
<div class="t" style="left:2940.0px;top:922.4px;font-size:19.19px;line-height:19.19px;color:#444;-webkit-text-stroke:0.3px #444;transform:scaleX(0.8421);">Posortowane według</div>
<div class="t" style="left:3101.8px;top:922.4px;font-size:19.19px;line-height:19.19px;color:#444;-webkit-text-stroke:0.3px #444;transform:scaleX(0.8367);">Data utworzenia</div>
<div class="t" style="left:779.0px;top:962.9px;font-size:26.16px;line-height:26.16px;color:#111;-webkit-text-stroke:0.3px #111;transform:scaleX(0.9092);">Raporty Wpłat</div>
<div class="b" style="left:953.0px;top:959.6px;width:45.0px;height:34.4px;background:#efeff1;border-radius:6px;"></div>
<div class="t" style="left:959.5px;top:968.9px;font-size:19.62px;line-height:19.62px;font-weight:700;color:#7a7a7a;-webkit-text-stroke:0.35px #7a7a7a;transform:scaleX(0.9774);">152</div>
<div class="b" style="left:779.0px;top:1007.5px;width:2461.0px;height:1.5px;background:#d3d3d6;"></div>
<div class="b" style="left:779.0px;top:1105.0px;width:2461.0px;height:2.0px;background:#c9c9cc;"></div>
<div class="t" style="left:788.0px;top:1023.5px;font-size:20.35px;line-height:20.35px;font-weight:700;color:#222;-webkit-text-stroke:0.35px #222;transform:scaleX(0.8274);">Nazwa</div>
<div class="t" style="left:789.0px;top:1071.4px;font-size:19.62px;line-height:19.62px;color:#c4c4c8;-webkit-text-stroke:0.3px #c4c4c8;transform:scaleX(0.8218);">Szukaj</div>
<div class="b" style="left:788.0px;top:1093.5px;width:721.0px;height:1.5px;background:#e6e6e8;"></div>
<svg class="b" style="left:1497.0px;top:1024.0px" width="12.0" height="18.0" viewBox="0 0 12 18"><path d="M2 6L6 2L10 6M2 12L6 16L10 12" fill="none" stroke="#c9c9cc" stroke-width="1.4"/></svg>
<div class="t" style="left:1534.0px;top:1023.5px;font-size:20.35px;line-height:20.35px;font-weight:700;color:#222;-webkit-text-stroke:0.35px #222;transform:scaleX(0.7830);">Status</div>
<div class="t" style="left:1535.0px;top:1071.4px;font-size:19.62px;line-height:19.62px;color:#c4c4c8;-webkit-text-stroke:0.3px #c4c4c8;transform:scaleX(0.9357);">Fitruj</div>
<div class="b" style="left:1534.0px;top:1093.5px;width:720.7px;height:1.5px;background:#e6e6e8;"></div>
<svg class="b" style="left:2242.7px;top:1024.0px" width="12.0" height="18.0" viewBox="0 0 12 18"><path d="M2 6L6 2L10 6M2 12L6 16L10 12" fill="none" stroke="#c9c9cc" stroke-width="1.4"/></svg>
<div class="t" style="left:2279.7px;top:1023.5px;font-size:20.35px;line-height:20.35px;font-weight:700;color:#222;-webkit-text-stroke:0.35px #222;transform:scaleX(0.8344);">Data utworzenia</div>
<div class="t" style="left:2280.7px;top:1071.4px;font-size:19.62px;line-height:19.62px;color:#c4c4c8;-webkit-text-stroke:0.3px #c4c4c8;transform:scaleX(0.9357);">Fitruj</div>
<div class="b" style="left:2279.7px;top:1093.5px;width:720.8px;height:1.5px;background:#e6e6e8;"></div>
<svg class="b" style="left:2987.3px;top:1024.0px" width="12.0" height="18.0" viewBox="0 0 12 18"><path d="M2 6L6 2L10 6" fill="none" stroke="#d0d0d3" stroke-width="1.3"/><path d="M1.8 11.8L6 15.8L10.2 11.8" fill="none" stroke="#333" stroke-width="1.5"/></svg>
<svg class="b" style="left:1491.0px;top:1073.0px" width="19.0" height="19.0" viewBox="0 0 19 19"><circle cx="7.8" cy="7.8" r="5.8" fill="none" stroke="#b9b9bd" stroke-width="2.2"/><path d="M12 12L17 17" stroke="#b9b9bd" stroke-width="2.6" stroke-linecap="round"/></svg>
<svg class="b" style="left:2241.0px;top:1075.0px" width="13.0" height="10.0" viewBox="0 0 13 10"><path d="M1.2 1.8L6.5 7L11.8 1.8" fill="none" stroke="#b9b9bd" stroke-width="1.6"/></svg>
<svg class="b" style="left:2984.0px;top:1071.0px" width="18.0" height="20.0" viewBox="0 0 18 20"><rect x="1.2" y="4" width="15.6" height="14.8" rx="1.2" fill="none" stroke="#b9b9bd" stroke-width="1.6"/><path d="M1.2 7.5H16.8" stroke="#b9b9bd" stroke-width="1.6"/><path d="M5 1.5V5.5M13 1.5V5.5" stroke="#b9b9bd" stroke-width="1.8"/></svg>
<div class="b" style="left:779.0px;top:1169.0px;width:2461.0px;height:64.0px;background:#fafafa;"></div>
<div class="b" style="left:779.0px;top:1169.0px;width:2461.0px;height:1.0px;background:#e8e8ea;"></div>
<div class="b" style="left:779.0px;top:1233.0px;width:2461.0px;height:1.0px;background:#e8e8ea;"></div>
<div class="b" style="left:779.0px;top:1296.0px;width:2461.0px;height:64.0px;background:#fafafa;"></div>
<div class="b" style="left:779.0px;top:1296.0px;width:2461.0px;height:1.0px;background:#e8e8ea;"></div>
<div class="b" style="left:779.0px;top:1360.0px;width:2461.0px;height:1.0px;background:#e8e8ea;"></div>
<div class="b" style="left:779.0px;top:1423.0px;width:2461.0px;height:63.0px;background:#fafafa;"></div>
<div class="b" style="left:779.0px;top:1423.0px;width:2461.0px;height:1.0px;background:#e8e8ea;"></div>
<div class="b" style="left:779.0px;top:1486.0px;width:2461.0px;height:1.0px;background:#e8e8ea;"></div>
<div class="b" style="left:779.0px;top:1550.0px;width:2461.0px;height:63.0px;background:#fafafa;"></div>
<div class="b" style="left:779.0px;top:1550.0px;width:2461.0px;height:1.0px;background:#e8e8ea;"></div>
<div class="b" style="left:779.0px;top:1613.0px;width:2461.0px;height:1.0px;background:#e8e8ea;"></div>
<div class="b" style="left:779.0px;top:1677.0px;width:2461.0px;height:63.0px;background:#fafafa;"></div>
<div class="b" style="left:779.0px;top:1677.0px;width:2461.0px;height:1.0px;background:#e8e8ea;"></div>
<div class="b" style="left:779.0px;top:1740.0px;width:2461.0px;height:1.0px;background:#e8e8ea;"></div>
<div class="b" style="left:779.0px;top:1803.0px;width:2461.0px;height:64.0px;background:#fafafa;"></div>
<div class="b" style="left:779.0px;top:1803.0px;width:2461.0px;height:1.0px;background:#e8e8ea;"></div>
<div class="b" style="left:779.0px;top:1867.0px;width:2461.0px;height:1.0px;background:#e8e8ea;"></div>
<div class="b" style="left:779.0px;top:1930.0px;width:2461.0px;height:64.0px;background:#fafafa;"></div>
<div class="b" style="left:779.0px;top:1930.0px;width:2461.0px;height:1.0px;background:#e8e8ea;"></div>
<div class="b" style="left:779.0px;top:1994.0px;width:2461.0px;height:1.0px;background:#e8e8ea;"></div>
<div class="b" style="left:779.0px;top:2055.8px;width:2461.0px;height:1.4px;background:#e6e6e8;"></div>
<div class="b" style="left:778.2px;top:1008.0px;width:1.5px;height:1049.0px;background:#ececee;"></div>
<div class="b" style="left:1524.2px;top:1008.0px;width:1.5px;height:1049.0px;background:#ececee;"></div>
<div class="b" style="left:2269.9px;top:1008.0px;width:1.5px;height:1049.0px;background:#ececee;"></div>
<div class="b" style="left:3015.8px;top:1008.0px;width:1.5px;height:1049.0px;background:#ececee;"></div>
<div class="b" style="left:3239.2px;top:1008.0px;width:1.5px;height:1049.0px;background:#ececee;"></div>
<div class="t" style="left:787.3px;top:1128.2px;font-size:20.20px;line-height:20.20px;color:#333;-webkit-text-stroke:0.3px #333;transform:scaleX(0.8889);">zest_1010_2023-04-20-2023-04-20.csv</div>
<div class="t" style="left:1533.4px;top:1128.2px;font-size:20.20px;line-height:20.20px;color:#333;-webkit-text-stroke:0.3px #333;transform:scaleX(0.8979);">Gotowy</div>
<div class="t" style="left:2279.4px;top:1128.2px;font-size:20.20px;line-height:20.20px;color:#333;-webkit-text-stroke:0.3px #333;transform:scaleX(0.8858);">20.04.2023 08:34:04</div>
<div class="b" style="left:3104.0px;top:1113.3px;width:48.8px;height:48.8px;background:#fdfdfd;border:2px solid #b3dfba;border-radius:50%;box-sizing:border-box;box-shadow:0 3px 5px rgba(0,0,0,0.12);"></div>
<svg class="b" style="left:3119.8px;top:1128.7px" width="18.0" height="16.0" viewBox="0 0 18 16"><rect x="7.7" y="0.5" width="2.8" height="7.5" fill="#263759"/><path d="M4.6 6.4H13.6L9.1 10.9Z" fill="#263759"/><path d="M1.2 10.2H6.6L9.1 12.7L11.6 10.2H16.8V14.5Q16.8 15.4 15.9 15.4H2.1Q1.2 15.4 1.2 14.5Z" fill="#263759"/><rect x="12.2" y="12.4" width="1.3" height="1.3" fill="#fff"/><rect x="14.3" y="12.4" width="1.3" height="1.3" fill="#fff"/></svg>
<div class="t" style="left:787.3px;top:1191.6px;font-size:20.20px;line-height:20.20px;color:#333;-webkit-text-stroke:0.3px #333;transform:scaleX(0.8889);">zest_1010_2023-04-01-2023-04-19.csv</div>
<div class="t" style="left:1533.4px;top:1191.6px;font-size:20.20px;line-height:20.20px;color:#333;-webkit-text-stroke:0.3px #333;transform:scaleX(0.8979);">Gotowy</div>
<div class="t" style="left:2279.4px;top:1191.6px;font-size:20.20px;line-height:20.20px;color:#333;-webkit-text-stroke:0.3px #333;transform:scaleX(0.8858);">19.04.2023 13:15:49</div>
<div class="b" style="left:3104.0px;top:1176.7px;width:48.8px;height:48.8px;background:#fdfdfd;border:2px solid #b3dfba;border-radius:50%;box-sizing:border-box;box-shadow:0 3px 5px rgba(0,0,0,0.12);"></div>
<svg class="b" style="left:3119.8px;top:1192.1px" width="18.0" height="16.0" viewBox="0 0 18 16"><rect x="7.7" y="0.5" width="2.8" height="7.5" fill="#263759"/><path d="M4.6 6.4H13.6L9.1 10.9Z" fill="#263759"/><path d="M1.2 10.2H6.6L9.1 12.7L11.6 10.2H16.8V14.5Q16.8 15.4 15.9 15.4H2.1Q1.2 15.4 1.2 14.5Z" fill="#263759"/><rect x="12.2" y="12.4" width="1.3" height="1.3" fill="#fff"/><rect x="14.3" y="12.4" width="1.3" height="1.3" fill="#fff"/></svg>
<div class="t" style="left:787.3px;top:1255.0px;font-size:20.20px;line-height:20.20px;color:#333;-webkit-text-stroke:0.3px #333;transform:scaleX(0.8889);">zest_1010_2023-03-01-2023-03-31.csv</div>
<div class="t" style="left:1533.4px;top:1255.0px;font-size:20.20px;line-height:20.20px;color:#333;-webkit-text-stroke:0.3px #333;transform:scaleX(0.8979);">Gotowy</div>
<div class="t" style="left:2279.4px;top:1255.0px;font-size:20.20px;line-height:20.20px;color:#333;-webkit-text-stroke:0.3px #333;transform:scaleX(0.8858);">04.04.2023 13:03:48</div>
<div class="b" style="left:3104.0px;top:1240.1px;width:48.8px;height:48.8px;background:#fdfdfd;border:2px solid #b3dfba;border-radius:50%;box-sizing:border-box;box-shadow:0 3px 5px rgba(0,0,0,0.12);"></div>
<svg class="b" style="left:3119.8px;top:1255.5px" width="18.0" height="16.0" viewBox="0 0 18 16"><rect x="7.7" y="0.5" width="2.8" height="7.5" fill="#263759"/><path d="M4.6 6.4H13.6L9.1 10.9Z" fill="#263759"/><path d="M1.2 10.2H6.6L9.1 12.7L11.6 10.2H16.8V14.5Q16.8 15.4 15.9 15.4H2.1Q1.2 15.4 1.2 14.5Z" fill="#263759"/><rect x="12.2" y="12.4" width="1.3" height="1.3" fill="#fff"/><rect x="14.3" y="12.4" width="1.3" height="1.3" fill="#fff"/></svg>
<div class="t" style="left:787.3px;top:1318.4px;font-size:20.20px;line-height:20.20px;color:#333;-webkit-text-stroke:0.3px #333;transform:scaleX(0.8889);">zest_1010_2023-03-29-2023-04-04.csv</div>
<div class="t" style="left:1533.4px;top:1318.4px;font-size:20.20px;line-height:20.20px;color:#333;-webkit-text-stroke:0.3px #333;transform:scaleX(0.8979);">Gotowy</div>
<div class="t" style="left:2279.4px;top:1318.4px;font-size:20.20px;line-height:20.20px;color:#333;-webkit-text-stroke:0.3px #333;transform:scaleX(0.8858);">04.04.2023 13:03:08</div>
<div class="b" style="left:3104.0px;top:1303.5px;width:48.8px;height:48.8px;background:#fdfdfd;border:2px solid #b3dfba;border-radius:50%;box-sizing:border-box;box-shadow:0 3px 5px rgba(0,0,0,0.12);"></div>
<svg class="b" style="left:3119.8px;top:1318.9px" width="18.0" height="16.0" viewBox="0 0 18 16"><rect x="7.7" y="0.5" width="2.8" height="7.5" fill="#263759"/><path d="M4.6 6.4H13.6L9.1 10.9Z" fill="#263759"/><path d="M1.2 10.2H6.6L9.1 12.7L11.6 10.2H16.8V14.5Q16.8 15.4 15.9 15.4H2.1Q1.2 15.4 1.2 14.5Z" fill="#263759"/><rect x="12.2" y="12.4" width="1.3" height="1.3" fill="#fff"/><rect x="14.3" y="12.4" width="1.3" height="1.3" fill="#fff"/></svg>
<div class="t" style="left:787.3px;top:1381.8px;font-size:20.20px;line-height:20.20px;color:#333;-webkit-text-stroke:0.3px #333;transform:scaleX(0.8889);">zest_1010_2023-03-16-2023-03-16.csv</div>
<div class="t" style="left:1533.4px;top:1381.8px;font-size:20.20px;line-height:20.20px;color:#333;-webkit-text-stroke:0.3px #333;transform:scaleX(0.8979);">Gotowy</div>
<div class="t" style="left:2279.4px;top:1381.8px;font-size:20.20px;line-height:20.20px;color:#333;-webkit-text-stroke:0.3px #333;transform:scaleX(0.8858);">16.03.2023 14:19:15</div>
<div class="b" style="left:3104.0px;top:1366.9px;width:48.8px;height:48.8px;background:#fdfdfd;border:2px solid #b3dfba;border-radius:50%;box-sizing:border-box;box-shadow:0 3px 5px rgba(0,0,0,0.12);"></div>
<svg class="b" style="left:3119.8px;top:1382.3px" width="18.0" height="16.0" viewBox="0 0 18 16"><rect x="7.7" y="0.5" width="2.8" height="7.5" fill="#263759"/><path d="M4.6 6.4H13.6L9.1 10.9Z" fill="#263759"/><path d="M1.2 10.2H6.6L9.1 12.7L11.6 10.2H16.8V14.5Q16.8 15.4 15.9 15.4H2.1Q1.2 15.4 1.2 14.5Z" fill="#263759"/><rect x="12.2" y="12.4" width="1.3" height="1.3" fill="#fff"/><rect x="14.3" y="12.4" width="1.3" height="1.3" fill="#fff"/></svg>
<div class="t" style="left:787.3px;top:1445.2px;font-size:20.20px;line-height:20.20px;color:#333;-webkit-text-stroke:0.3px #333;transform:scaleX(0.8889);">zest_1010_2023-02-01-2023-02-28.csv</div>
<div class="t" style="left:1533.4px;top:1445.2px;font-size:20.20px;line-height:20.20px;color:#333;-webkit-text-stroke:0.3px #333;transform:scaleX(0.8979);">Gotowy</div>
<div class="t" style="left:2279.4px;top:1445.2px;font-size:20.20px;line-height:20.20px;color:#333;-webkit-text-stroke:0.3px #333;transform:scaleX(0.8858);">15.03.2023 14:22:51</div>
<div class="b" style="left:3104.0px;top:1430.3px;width:48.8px;height:48.8px;background:#fdfdfd;border:2px solid #b3dfba;border-radius:50%;box-sizing:border-box;box-shadow:0 3px 5px rgba(0,0,0,0.12);"></div>
<svg class="b" style="left:3119.8px;top:1445.7px" width="18.0" height="16.0" viewBox="0 0 18 16"><rect x="7.7" y="0.5" width="2.8" height="7.5" fill="#263759"/><path d="M4.6 6.4H13.6L9.1 10.9Z" fill="#263759"/><path d="M1.2 10.2H6.6L9.1 12.7L11.6 10.2H16.8V14.5Q16.8 15.4 15.9 15.4H2.1Q1.2 15.4 1.2 14.5Z" fill="#263759"/><rect x="12.2" y="12.4" width="1.3" height="1.3" fill="#fff"/><rect x="14.3" y="12.4" width="1.3" height="1.3" fill="#fff"/></svg>
<div class="t" style="left:787.3px;top:1508.6px;font-size:20.20px;line-height:20.20px;color:#333;-webkit-text-stroke:0.3px #333;transform:scaleX(0.8965);">zest_1010_2022-11-30-2022-11-30.csv</div>
<div class="t" style="left:1533.4px;top:1508.6px;font-size:20.20px;line-height:20.20px;color:#333;-webkit-text-stroke:0.3px #333;transform:scaleX(0.8979);">Gotowy</div>
<div class="t" style="left:2279.4px;top:1508.6px;font-size:20.20px;line-height:20.20px;color:#333;-webkit-text-stroke:0.3px #333;transform:scaleX(0.8930);">10.03.2023 11:17:32</div>
<div class="b" style="left:3104.0px;top:1493.7px;width:48.8px;height:48.8px;background:#fdfdfd;border:2px solid #b3dfba;border-radius:50%;box-sizing:border-box;box-shadow:0 3px 5px rgba(0,0,0,0.12);"></div>
<svg class="b" style="left:3119.8px;top:1509.1px" width="18.0" height="16.0" viewBox="0 0 18 16"><rect x="7.7" y="0.5" width="2.8" height="7.5" fill="#263759"/><path d="M4.6 6.4H13.6L9.1 10.9Z" fill="#263759"/><path d="M1.2 10.2H6.6L9.1 12.7L11.6 10.2H16.8V14.5Q16.8 15.4 15.9 15.4H2.1Q1.2 15.4 1.2 14.5Z" fill="#263759"/><rect x="12.2" y="12.4" width="1.3" height="1.3" fill="#fff"/><rect x="14.3" y="12.4" width="1.3" height="1.3" fill="#fff"/></svg>
<div class="t" style="left:787.3px;top:1572.0px;font-size:20.20px;line-height:20.20px;color:#333;-webkit-text-stroke:0.3px #333;transform:scaleX(0.8889);">zest_1010_2023-02-01-2023-02-28.csv</div>
<div class="t" style="left:1533.4px;top:1572.0px;font-size:20.20px;line-height:20.20px;color:#333;-webkit-text-stroke:0.3px #333;transform:scaleX(0.8979);">Gotowy</div>
<div class="t" style="left:2279.4px;top:1572.0px;font-size:20.20px;line-height:20.20px;color:#333;-webkit-text-stroke:0.3px #333;transform:scaleX(0.8858);">01.03.2023 14:25:09</div>
<div class="b" style="left:3104.0px;top:1557.1px;width:48.8px;height:48.8px;background:#fdfdfd;border:2px solid #b3dfba;border-radius:50%;box-sizing:border-box;box-shadow:0 3px 5px rgba(0,0,0,0.12);"></div>
<svg class="b" style="left:3119.8px;top:1572.5px" width="18.0" height="16.0" viewBox="0 0 18 16"><rect x="7.7" y="0.5" width="2.8" height="7.5" fill="#263759"/><path d="M4.6 6.4H13.6L9.1 10.9Z" fill="#263759"/><path d="M1.2 10.2H6.6L9.1 12.7L11.6 10.2H16.8V14.5Q16.8 15.4 15.9 15.4H2.1Q1.2 15.4 1.2 14.5Z" fill="#263759"/><rect x="12.2" y="12.4" width="1.3" height="1.3" fill="#fff"/><rect x="14.3" y="12.4" width="1.3" height="1.3" fill="#fff"/></svg>
<div class="t" style="left:787.3px;top:1635.4px;font-size:20.20px;line-height:20.20px;color:#333;-webkit-text-stroke:0.3px #333;transform:scaleX(0.8889);">zest_1010_2023-02-15-2023-02-15.csv</div>
<div class="t" style="left:1533.4px;top:1635.4px;font-size:20.20px;line-height:20.20px;color:#333;-webkit-text-stroke:0.3px #333;transform:scaleX(0.8979);">Gotowy</div>
<div class="t" style="left:2279.4px;top:1635.4px;font-size:20.20px;line-height:20.20px;color:#333;-webkit-text-stroke:0.3px #333;transform:scaleX(0.8858);">15.02.2023 17:30:46</div>
<div class="b" style="left:3104.0px;top:1620.5px;width:48.8px;height:48.8px;background:#fdfdfd;border:2px solid #b3dfba;border-radius:50%;box-sizing:border-box;box-shadow:0 3px 5px rgba(0,0,0,0.12);"></div>
<svg class="b" style="left:3119.8px;top:1635.9px" width="18.0" height="16.0" viewBox="0 0 18 16"><rect x="7.7" y="0.5" width="2.8" height="7.5" fill="#263759"/><path d="M4.6 6.4H13.6L9.1 10.9Z" fill="#263759"/><path d="M1.2 10.2H6.6L9.1 12.7L11.6 10.2H16.8V14.5Q16.8 15.4 15.9 15.4H2.1Q1.2 15.4 1.2 14.5Z" fill="#263759"/><rect x="12.2" y="12.4" width="1.3" height="1.3" fill="#fff"/><rect x="14.3" y="12.4" width="1.3" height="1.3" fill="#fff"/></svg>
<div class="t" style="left:787.3px;top:1698.8px;font-size:20.20px;line-height:20.20px;color:#333;-webkit-text-stroke:0.3px #333;transform:scaleX(0.8889);">zest_1010_2023-02-10-2023-02-10.csv</div>
<div class="t" style="left:1533.4px;top:1698.8px;font-size:20.20px;line-height:20.20px;color:#333;-webkit-text-stroke:0.3px #333;transform:scaleX(0.8979);">Gotowy</div>
<div class="t" style="left:2279.4px;top:1698.8px;font-size:20.20px;line-height:20.20px;color:#333;-webkit-text-stroke:0.3px #333;transform:scaleX(0.8858);">10.02.2023 09:17:33</div>
<div class="b" style="left:3104.0px;top:1683.9px;width:48.8px;height:48.8px;background:#fdfdfd;border:2px solid #b3dfba;border-radius:50%;box-sizing:border-box;box-shadow:0 3px 5px rgba(0,0,0,0.12);"></div>
<svg class="b" style="left:3119.8px;top:1699.3px" width="18.0" height="16.0" viewBox="0 0 18 16"><rect x="7.7" y="0.5" width="2.8" height="7.5" fill="#263759"/><path d="M4.6 6.4H13.6L9.1 10.9Z" fill="#263759"/><path d="M1.2 10.2H6.6L9.1 12.7L11.6 10.2H16.8V14.5Q16.8 15.4 15.9 15.4H2.1Q1.2 15.4 1.2 14.5Z" fill="#263759"/><rect x="12.2" y="12.4" width="1.3" height="1.3" fill="#fff"/><rect x="14.3" y="12.4" width="1.3" height="1.3" fill="#fff"/></svg>
<div class="t" style="left:787.3px;top:1762.2px;font-size:20.20px;line-height:20.20px;color:#333;-webkit-text-stroke:0.3px #333;transform:scaleX(0.8889);">zest_1010_2023-02-06-2023-02-06.csv</div>
<div class="t" style="left:1533.4px;top:1762.2px;font-size:20.20px;line-height:20.20px;color:#333;-webkit-text-stroke:0.3px #333;transform:scaleX(0.8979);">Gotowy</div>
<div class="t" style="left:2279.4px;top:1762.2px;font-size:20.20px;line-height:20.20px;color:#333;-webkit-text-stroke:0.3px #333;transform:scaleX(0.8930);">06.02.2023 11:34:36</div>
<div class="b" style="left:3104.0px;top:1747.3px;width:48.8px;height:48.8px;background:#fdfdfd;border:2px solid #b3dfba;border-radius:50%;box-sizing:border-box;box-shadow:0 3px 5px rgba(0,0,0,0.12);"></div>
<svg class="b" style="left:3119.8px;top:1762.7px" width="18.0" height="16.0" viewBox="0 0 18 16"><rect x="7.7" y="0.5" width="2.8" height="7.5" fill="#263759"/><path d="M4.6 6.4H13.6L9.1 10.9Z" fill="#263759"/><path d="M1.2 10.2H6.6L9.1 12.7L11.6 10.2H16.8V14.5Q16.8 15.4 15.9 15.4H2.1Q1.2 15.4 1.2 14.5Z" fill="#263759"/><rect x="12.2" y="12.4" width="1.3" height="1.3" fill="#fff"/><rect x="14.3" y="12.4" width="1.3" height="1.3" fill="#fff"/></svg>
<div class="t" style="left:787.3px;top:1825.6px;font-size:20.20px;line-height:20.20px;color:#333;-webkit-text-stroke:0.3px #333;transform:scaleX(0.8889);">zest_1010_2023-02-03-2023-02-03.csv</div>
<div class="t" style="left:1533.4px;top:1825.6px;font-size:20.20px;line-height:20.20px;color:#333;-webkit-text-stroke:0.3px #333;transform:scaleX(0.8979);">Gotowy</div>
<div class="t" style="left:2279.4px;top:1825.6px;font-size:20.20px;line-height:20.20px;color:#333;-webkit-text-stroke:0.3px #333;transform:scaleX(0.8858);">03.02.2023 15:27:14</div>
<div class="b" style="left:3104.0px;top:1810.7px;width:48.8px;height:48.8px;background:#fdfdfd;border:2px solid #b3dfba;border-radius:50%;box-sizing:border-box;box-shadow:0 3px 5px rgba(0,0,0,0.12);"></div>
<svg class="b" style="left:3119.8px;top:1826.1px" width="18.0" height="16.0" viewBox="0 0 18 16"><rect x="7.7" y="0.5" width="2.8" height="7.5" fill="#263759"/><path d="M4.6 6.4H13.6L9.1 10.9Z" fill="#263759"/><path d="M1.2 10.2H6.6L9.1 12.7L11.6 10.2H16.8V14.5Q16.8 15.4 15.9 15.4H2.1Q1.2 15.4 1.2 14.5Z" fill="#263759"/><rect x="12.2" y="12.4" width="1.3" height="1.3" fill="#fff"/><rect x="14.3" y="12.4" width="1.3" height="1.3" fill="#fff"/></svg>
<div class="t" style="left:787.3px;top:1889.0px;font-size:20.20px;line-height:20.20px;color:#333;-webkit-text-stroke:0.3px #333;transform:scaleX(0.8927);">zest_1010_2023-01-01-2023-01-11.csv</div>
<div class="t" style="left:1533.4px;top:1889.0px;font-size:20.20px;line-height:20.20px;color:#333;-webkit-text-stroke:0.3px #333;transform:scaleX(0.8979);">Gotowy</div>
<div class="t" style="left:2279.4px;top:1889.0px;font-size:20.20px;line-height:20.20px;color:#333;-webkit-text-stroke:0.3px #333;transform:scaleX(0.8930);">11.01.2023 19:23:25</div>
<div class="b" style="left:3104.0px;top:1874.1px;width:48.8px;height:48.8px;background:#fdfdfd;border:2px solid #b3dfba;border-radius:50%;box-sizing:border-box;box-shadow:0 3px 5px rgba(0,0,0,0.12);"></div>
<svg class="b" style="left:3119.8px;top:1889.5px" width="18.0" height="16.0" viewBox="0 0 18 16"><rect x="7.7" y="0.5" width="2.8" height="7.5" fill="#263759"/><path d="M4.6 6.4H13.6L9.1 10.9Z" fill="#263759"/><path d="M1.2 10.2H6.6L9.1 12.7L11.6 10.2H16.8V14.5Q16.8 15.4 15.9 15.4H2.1Q1.2 15.4 1.2 14.5Z" fill="#263759"/><rect x="12.2" y="12.4" width="1.3" height="1.3" fill="#fff"/><rect x="14.3" y="12.4" width="1.3" height="1.3" fill="#fff"/></svg>
<div class="t" style="left:787.3px;top:1952.4px;font-size:20.20px;line-height:20.20px;color:#333;-webkit-text-stroke:0.3px #333;transform:scaleX(0.8927);">zest_1010_2023-01-01-2023-01-11.csv</div>
<div class="t" style="left:1533.4px;top:1952.4px;font-size:20.20px;line-height:20.20px;color:#333;-webkit-text-stroke:0.3px #333;transform:scaleX(0.8979);">Gotowy</div>
<div class="t" style="left:2279.4px;top:1952.4px;font-size:20.20px;line-height:20.20px;color:#333;-webkit-text-stroke:0.3px #333;transform:scaleX(0.8930);">11.01.2023 10:19:50</div>
<div class="b" style="left:3104.0px;top:1937.5px;width:48.8px;height:48.8px;background:#fdfdfd;border:2px solid #b3dfba;border-radius:50%;box-sizing:border-box;box-shadow:0 3px 5px rgba(0,0,0,0.12);"></div>
<svg class="b" style="left:3119.8px;top:1952.9px" width="18.0" height="16.0" viewBox="0 0 18 16"><rect x="7.7" y="0.5" width="2.8" height="7.5" fill="#263759"/><path d="M4.6 6.4H13.6L9.1 10.9Z" fill="#263759"/><path d="M1.2 10.2H6.6L9.1 12.7L11.6 10.2H16.8V14.5Q16.8 15.4 15.9 15.4H2.1Q1.2 15.4 1.2 14.5Z" fill="#263759"/><rect x="12.2" y="12.4" width="1.3" height="1.3" fill="#fff"/><rect x="14.3" y="12.4" width="1.3" height="1.3" fill="#fff"/></svg>
<div class="t" style="left:787.3px;top:2015.8px;font-size:20.20px;line-height:20.20px;color:#333;-webkit-text-stroke:0.3px #333;transform:scaleX(0.8889);">zest_1010_2023-01-10-2023-01-10.csv</div>
<div class="t" style="left:1533.4px;top:2015.8px;font-size:20.20px;line-height:20.20px;color:#333;-webkit-text-stroke:0.3px #333;transform:scaleX(0.8979);">Gotowy</div>
<div class="t" style="left:2279.4px;top:2015.8px;font-size:20.20px;line-height:20.20px;color:#333;-webkit-text-stroke:0.3px #333;transform:scaleX(0.8858);">10.01.2023 13:37:46</div>
<div class="b" style="left:3104.0px;top:2000.9px;width:48.8px;height:48.8px;background:#fdfdfd;border:2px solid #b3dfba;border-radius:50%;box-sizing:border-box;box-shadow:0 3px 5px rgba(0,0,0,0.12);"></div>
<svg class="b" style="left:3119.8px;top:2016.3px" width="18.0" height="16.0" viewBox="0 0 18 16"><rect x="7.7" y="0.5" width="2.8" height="7.5" fill="#263759"/><path d="M4.6 6.4H13.6L9.1 10.9Z" fill="#263759"/><path d="M1.2 10.2H6.6L9.1 12.7L11.6 10.2H16.8V14.5Q16.8 15.4 15.9 15.4H2.1Q1.2 15.4 1.2 14.5Z" fill="#263759"/><rect x="12.2" y="12.4" width="1.3" height="1.3" fill="#fff"/><rect x="14.3" y="12.4" width="1.3" height="1.3" fill="#fff"/></svg>
</div></body></html>
